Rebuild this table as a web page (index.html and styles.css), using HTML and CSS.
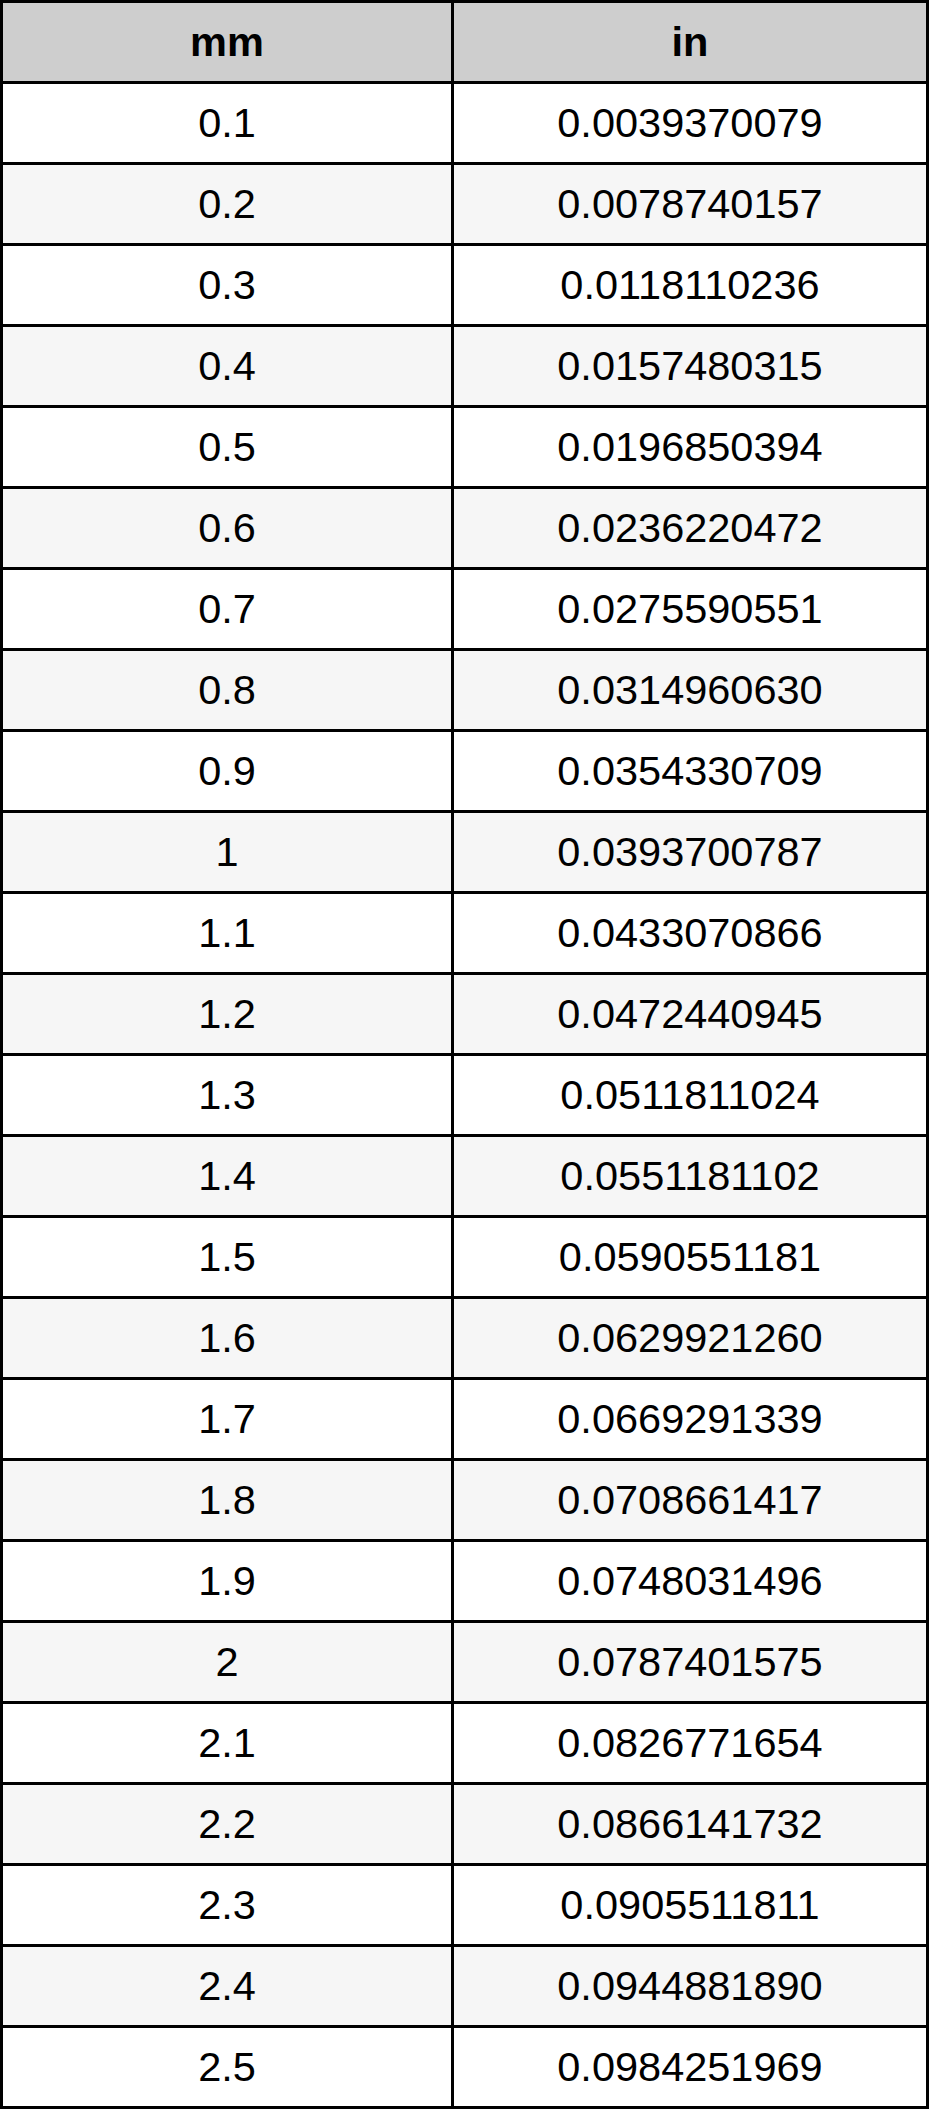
FILE: index.html
```html
<!DOCTYPE html>
<html>
<head>
<meta charset="utf-8">
<link rel="stylesheet" href="styles.css">
</head>
<body>
<table class="conv">
<thead>
<tr><th class="col-mm">mm</th><th class="col-in">in</th></tr>
</thead>
<tbody>
<tr><td>0.1</td><td>0.0039370079</td></tr>
<tr><td>0.2</td><td>0.0078740157</td></tr>
<tr><td>0.3</td><td>0.0118110236</td></tr>
<tr><td>0.4</td><td>0.0157480315</td></tr>
<tr><td>0.5</td><td>0.0196850394</td></tr>
<tr><td>0.6</td><td>0.0236220472</td></tr>
<tr><td>0.7</td><td>0.0275590551</td></tr>
<tr><td>0.8</td><td>0.0314960630</td></tr>
<tr><td>0.9</td><td>0.0354330709</td></tr>
<tr><td>1</td><td>0.0393700787</td></tr>
<tr><td>1.1</td><td>0.0433070866</td></tr>
<tr><td>1.2</td><td>0.0472440945</td></tr>
<tr><td>1.3</td><td>0.0511811024</td></tr>
<tr><td>1.4</td><td>0.0551181102</td></tr>
<tr><td>1.5</td><td>0.0590551181</td></tr>
<tr><td>1.6</td><td>0.0629921260</td></tr>
<tr><td>1.7</td><td>0.0669291339</td></tr>
<tr><td>1.8</td><td>0.0708661417</td></tr>
<tr><td>1.9</td><td>0.0748031496</td></tr>
<tr><td>2</td><td>0.0787401575</td></tr>
<tr><td>2.1</td><td>0.0826771654</td></tr>
<tr><td>2.2</td><td>0.0866141732</td></tr>
<tr><td>2.3</td><td>0.0905511811</td></tr>
<tr><td>2.4</td><td>0.0944881890</td></tr>
<tr><td>2.5</td><td>0.0984251969</td></tr>
</tbody>
</table>
</body>
</html>
```
FILE: styles.css
```css
html, body {
  margin: 0;
  padding: 0;
  background: #ffffff;
}

.conv {
  border-collapse: separate;
  border-spacing: 0;
  border-top: 3px solid #000;
  border-left: 3px solid #000;
  table-layout: fixed;
  width: 929px;
  font-family: "Liberation Sans", Arial, sans-serif;
  font-size: 41.5px;
  color: #000;
}

.conv th,
.conv td {
  border-right: 3px solid #000;
  border-bottom: 3px solid #000;
  padding: 0;
  text-align: center;
  vertical-align: middle;
  box-sizing: content-box;
  height: 78px;
  line-height: 78px;
}

.conv th {
  background: #cecece;
  font-weight: bold;
}

.col-mm {
  width: 448px;
}

.col-in {
  width: 472px;
}

.conv tbody tr:nth-child(even) td {
  background: #f6f6f6;
}
```
